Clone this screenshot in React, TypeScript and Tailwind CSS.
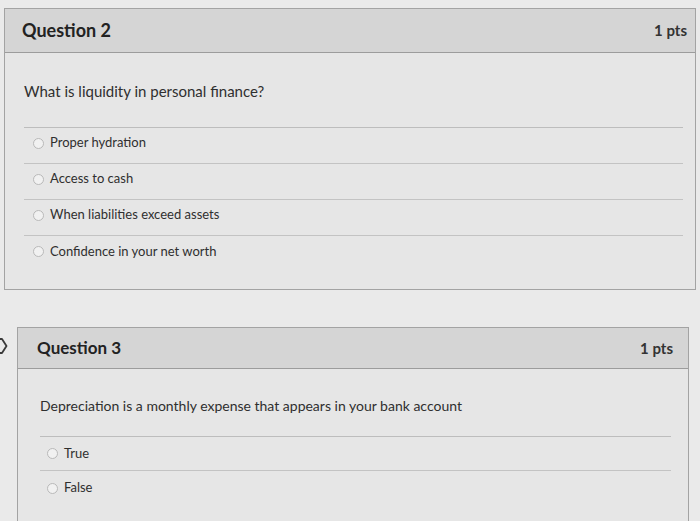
import React from 'react';

interface QuestionProps {
  title: string;
  points: string;
  text: string;
  answers: string[];
  headerCls: string;
  titleCls: string;
  bodyCls: string;
  textCls: string;
  rowCls: string;
  className?: string;
}

const Radio = () => (
  <span className="inline-block w-[11px] h-[11px] rounded-full border border-[#b9b9b9] bg-[#f1f1f1] shrink-0" />
);

const QuestionCard: React.FC<QuestionProps> = ({ title, points, text, answers, headerCls, titleCls, bodyCls, textCls, rowCls, className }) => (
  <div className={`border border-[#a3a3a3] bg-[#e6e6e6] ${className ?? ''}`}>
    <div className={`flex items-center justify-between bg-[#d5d5d5] border-b border-[#9c9c9c] ${headerCls}`}>
      <h2 className={`font-bold text-[#222] ${titleCls}`}>{title}</h2>
      <span className="text-[15px] font-bold text-[#333]">{points}</span>
    </div>
    <div className={bodyCls}>
      <p className={`text-[#2f2f2f] ${textCls}`}>{text}</p>
      <div className="border-t border-[#bdbdbd]">
        {answers.map((a, i) => (
          <div
            key={a}
            className={`flex items-center gap-[6px] ${rowCls} ${i < answers.length - 1 ? 'border-b border-[#c3c3c3]' : ''}`}
          >
            <Radio />
            <span className="text-[13px] text-[#2f2f2f]">{a}</span>
          </div>
        ))}
      </div>
    </div>
  </div>
);

export default function App() {
  return (
    <div
      className="w-[700px] h-[521px] overflow-hidden bg-[#eaeaea] pt-[8px]"
      style={{ fontFamily: 'Lato, "Open Sans", sans-serif' }}
    >
      <QuestionCard
        className="ml-[4px] w-[692px] h-[282px]"
        title="Question 2"
        points="1 pts"
        text="What is liquidity in personal finance?"
        answers={['Proper hydration', 'Access to cash', 'When liabilities exceed assets', 'Confidence in your net worth']}
        headerCls="h-[44px] pl-[17px] pr-[8px]"
        titleCls="text-[18px]"
        bodyCls="pl-[19px] pr-[12px]"
        textCls="text-[15px] pt-[27px] pb-[24px]"
        rowCls="h-[36px] pl-[9px] pb-[4px]"
      />
      <div className="flex items-start mt-[37px]">
        <div className="w-[17px] pt-[10px]">
          <svg width="10" height="18" viewBox="0 0 10 18" className="ml-[-2px]">
            <path d="M0 2 H4 L8.5 9 L4 16 H0" fill="none" stroke="#3a3a3a" strokeWidth="1.8" strokeLinejoin="round" />
          </svg>
        </div>
        <QuestionCard
          className="w-[672px] h-[260px]"
          title="Question 3"
          points="1 pts"
          text="Depreciation is a monthly expense that appears in your bank account"
          answers={['True', 'False']}
          headerCls="h-[41px] pl-[19px] pr-[15px]"
          titleCls="text-[17px]"
          bodyCls="pl-[22px] pr-[17px]"
          textCls="text-[14px] pt-[26px] pb-[20px]"
          rowCls="h-[34px] pl-[7px]"
        />
      </div>
    </div>
  );
}
